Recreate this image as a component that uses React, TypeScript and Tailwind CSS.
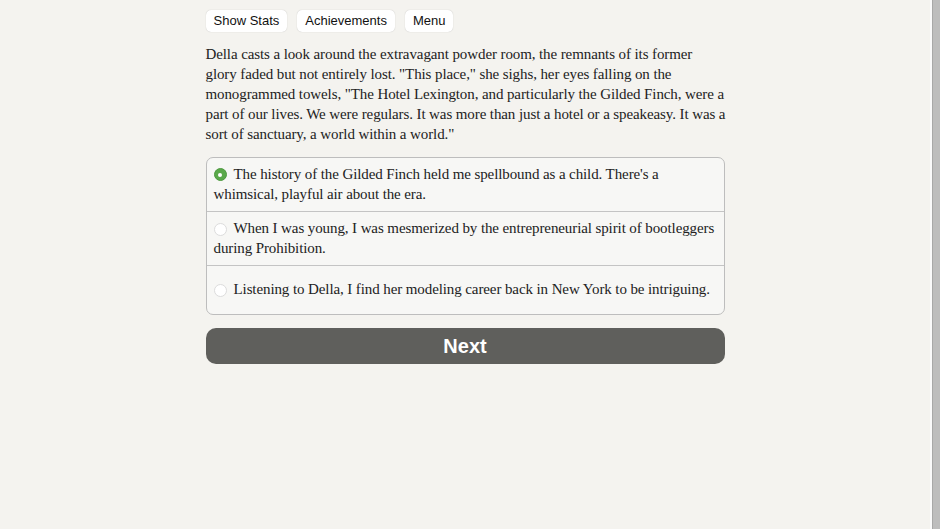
import React from "react";

const serif = { fontFamily: '"Palatino Linotype", Palatino, "Book Antiqua", "Liberation Serif", serif' };

function Radio({ checked }: { checked?: boolean }) {
  return checked ? (
    <span className="inline-block w-[13px] h-[13px] rounded-full bg-[#5aa84a] border border-[#4d9a3f] align-[-2px] mr-[7px] relative">
      <span className="absolute left-[3.5px] top-[3.5px] w-[4px] h-[4px] rounded-full bg-white" />
    </span>
  ) : (
    <span className="inline-block w-[13px] h-[13px] rounded-full bg-white border border-[#dcdcdc] align-[-3px] mr-[7px]" />
  );
}

export default function App() {
  return (
    <div className="w-[940px] h-[529px] flex bg-[#f4f3ef] overflow-hidden">
      <div className="flex-1 flex justify-center pl-[2px]">
        <div className="w-[519px] ml-[-2px] pt-[10px]">
          <div className="flex gap-[10px] font-['Liberation_Sans',Arial,sans-serif] text-[13px] text-[#111]">
            <button className="h-[22px] px-[8px] bg-white rounded-[5px] shadow-[0_0_1px_rgba(0,0,0,0.25)] leading-[22px]">Show Stats</button>
            <button className="h-[22px] px-[8px] bg-white rounded-[5px] shadow-[0_0_1px_rgba(0,0,0,0.25)] leading-[22px]">Achievements</button>
            <button className="h-[22px] px-[8px] bg-white rounded-[5px] shadow-[0_0_1px_rgba(0,0,0,0.25)] leading-[22px]">Menu</button>
          </div>
          <p className="mt-[12px] text-[15px] leading-[20px] tracking-[-0.1px] text-[#222] whitespace-nowrap" style={serif}>
            Della casts a look around the extravagant powder room, the remnants of its former
            <br />
            glory faded but not entirely lost. "This place," she sighs, her eyes falling on the
            <br />
            monogrammed towels, "The Hotel Lexington, and particularly the Gilded Finch, were a
            <br />
            part of our lives. We were regulars. It was more than just a hotel or a speakeasy. It was a
            <br />
            sort of sanctuary, a world within a world."
          </p>
          <div className="mt-[13px] border border-[#bdbdbd] rounded-[7px] bg-[#f7f7f5] text-[15px] leading-[20px] tracking-[-0.1px] text-[#222] whitespace-nowrap" style={serif}>
            <div className="px-[7px] pt-[6px] pb-[7px] border-b border-[#c4c4c4]">
              <Radio checked />
              The history of the Gilded Finch held me spellbound as a child. There's a
              <br />
              whimsical, playful air about the era.
            </div>
            <div className="px-[7px] pt-[6px] pb-[7px] border-b border-[#c4c4c4]">
              <Radio />
              When I was young, I was mesmerized by the entrepreneurial spirit of bootleggers
              <br />
              during Prohibition.
            </div>
            <div className="px-[7px] pt-[13px] pb-[15px]">
              <Radio />
              Listening to Della, I find her modeling career back in New York to be intriguing.
            </div>
          </div>
          <button className="mt-[13px] w-full h-[36px] rounded-[10px] bg-[#5f5f5c] text-white font-bold text-[20px] font-['Liberation_Sans',Arial,sans-serif] leading-[36px]">
            Next
          </button>
        </div>
      </div>
      <div className="w-[10px] flex">
        <div className="w-[2px] bg-[#fafafa]" />
        <div className="flex-1 bg-[#bdbdbd] border-l border-[#a8a8a8]" />
      </div>
    </div>
  );
}
